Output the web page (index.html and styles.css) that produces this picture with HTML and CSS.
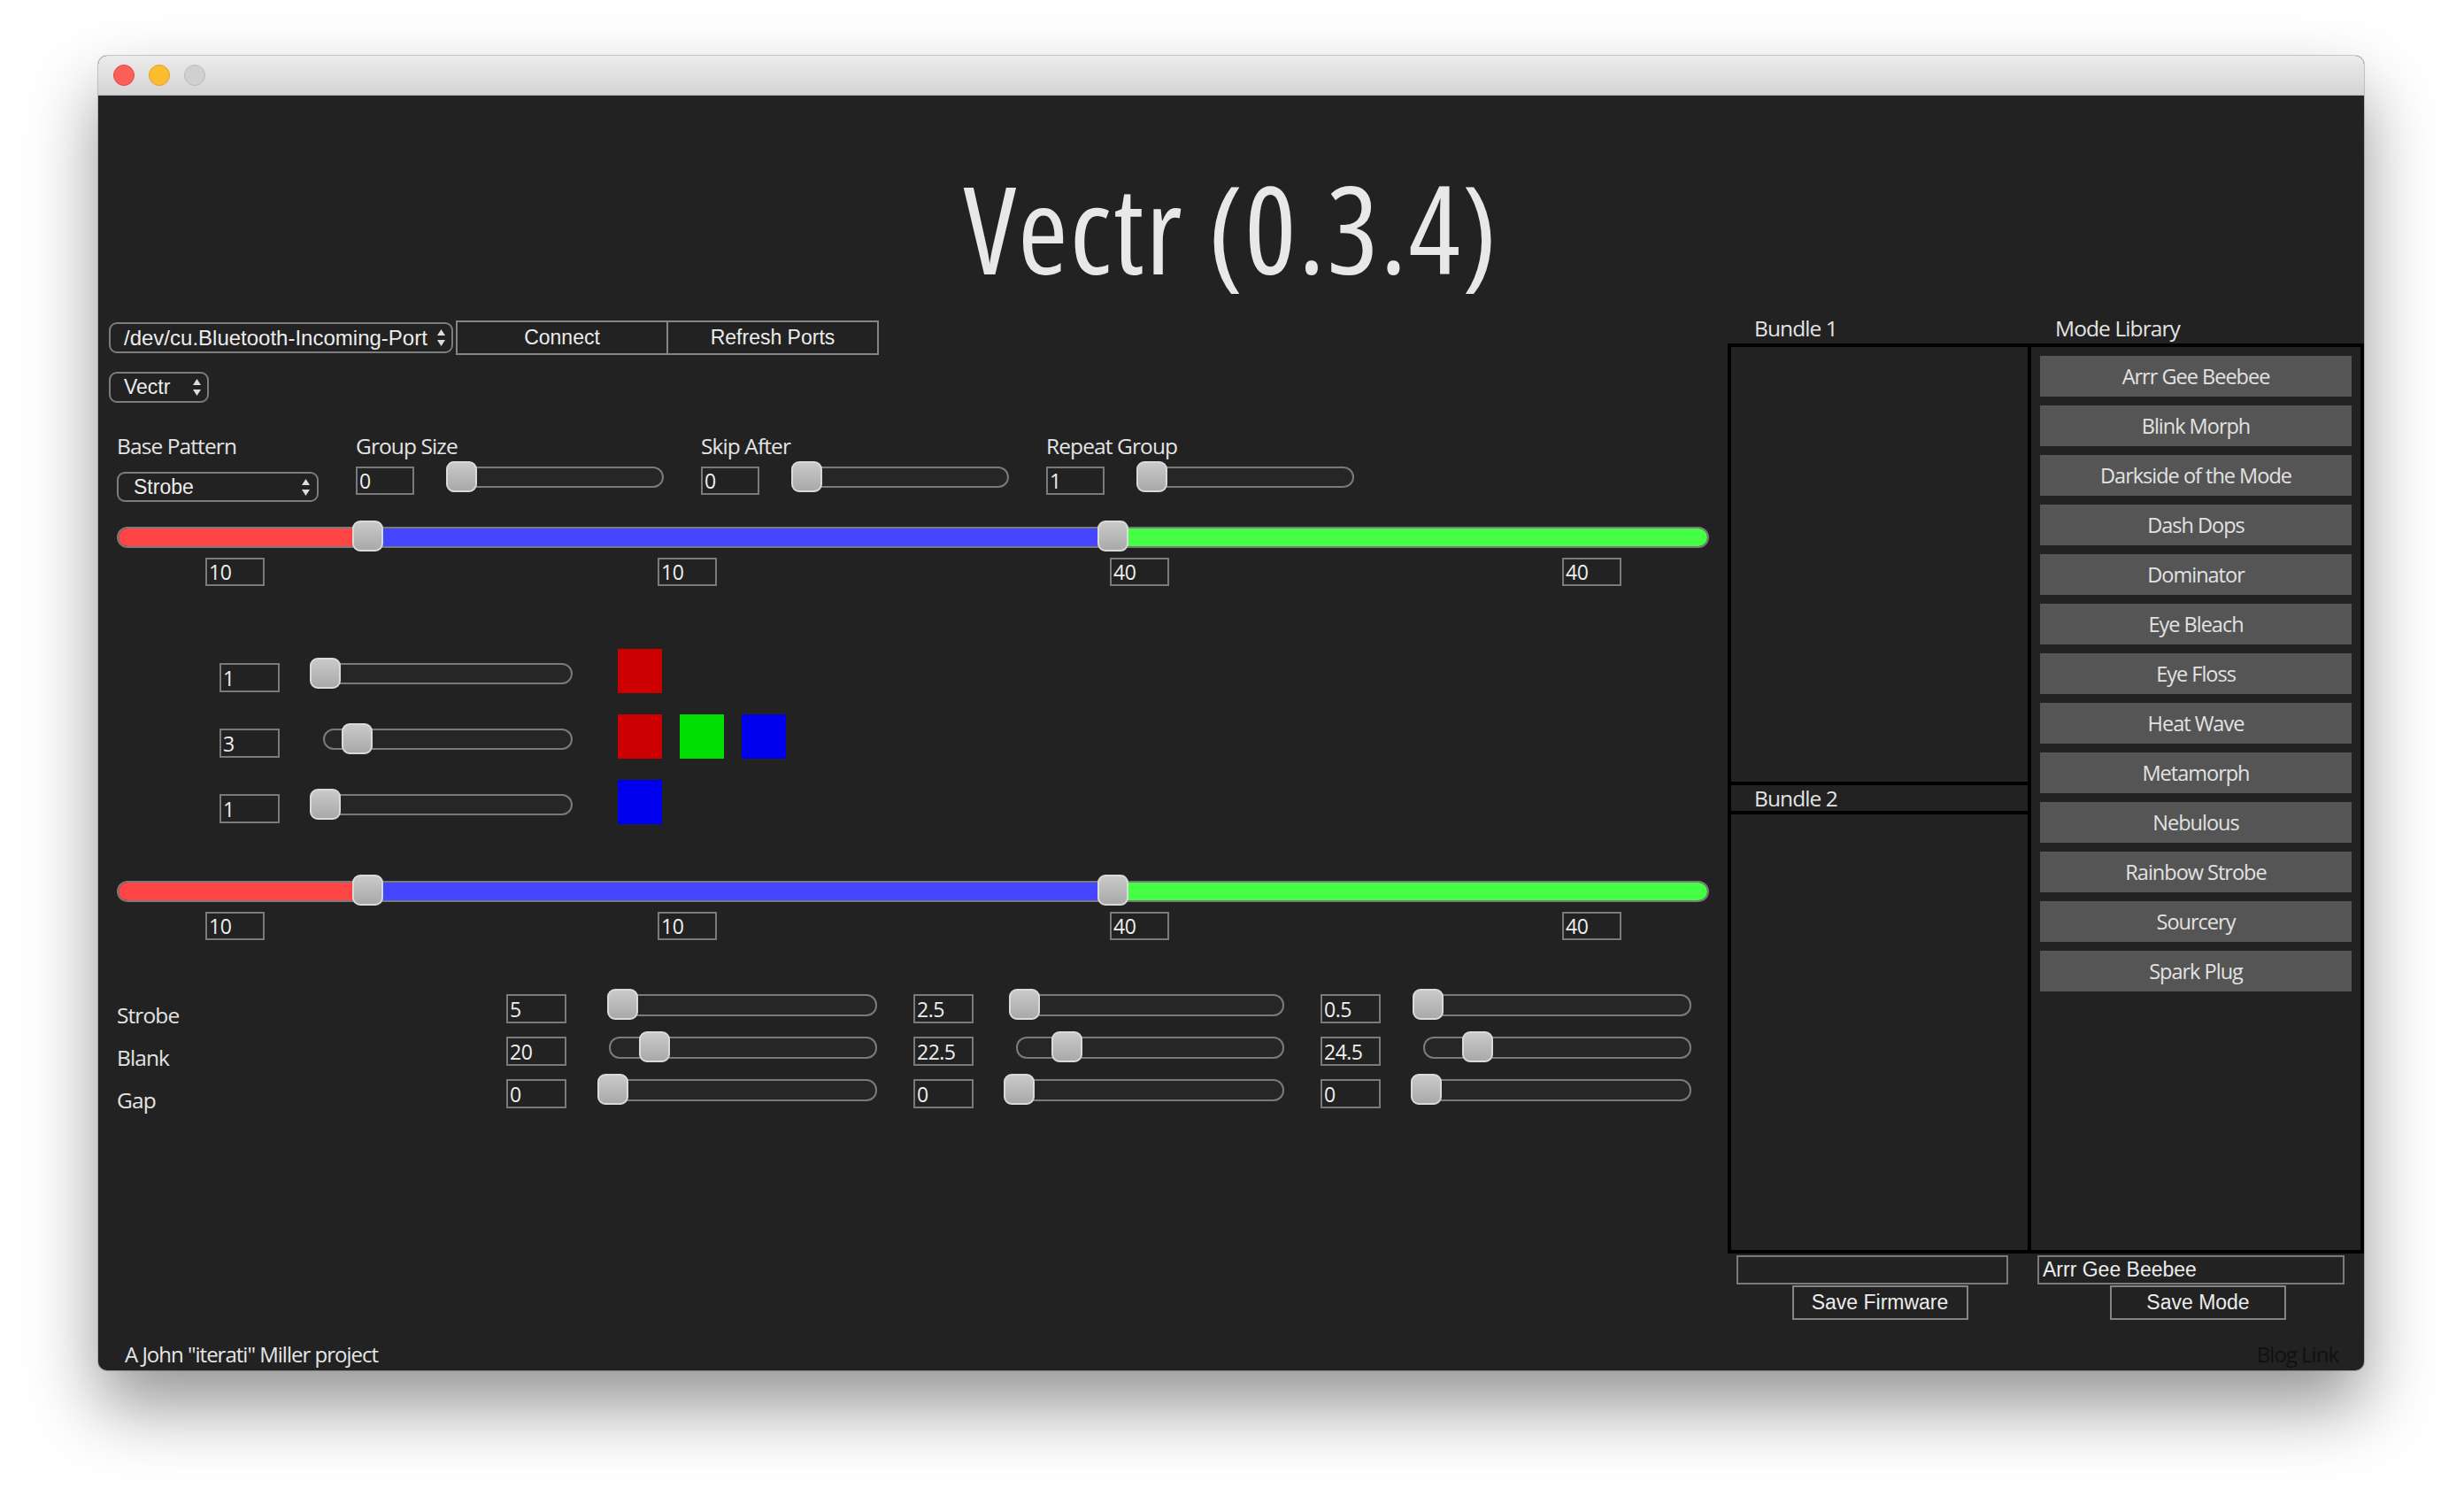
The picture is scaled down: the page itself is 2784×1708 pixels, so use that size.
FILE: index.html
```html
<!DOCTYPE html>
<html lang="en">
<head>
<meta charset="utf-8">
<title>Vectr</title>
<link rel="stylesheet" href="styles.css">
</head>
<body>
<div class="window">
  <div class="titlebar">
    <span class="light red"></span><span class="light yellow"></span><span class="light gray"></span>
  </div>
  <div class="content">
    <h1 class="title">Vectr (0.3.4)</h1>
    <div class="main">
      <div class="left">
        <div class="portrow">
          <div class="select port"><span class="sel-text">/dev/cu.Bluetooth-Incoming-Port</span><svg class="arrows" width="11" height="21" viewBox="0 0 11 21"><path d="M5.5 1 L10 8 H1 Z M5.5 20 L10 13 H1 Z"/></svg></div>
          <button class="btn connect">Connect</button>
          <button class="btn refresh">Refresh Ports</button>
        </div>
        <div class="select device"><span class="sel-text">Vectr</span><svg class="arrows" width="11" height="21" viewBox="0 0 11 21"><path d="M5.5 1 L10 8 H1 Z M5.5 20 L10 13 H1 Z"/></svg></div>

        <div class="section">
          <div class="params">
            <div class="param base">
              <div class="label">Base Pattern</div>
              <div class="select pattern"><span class="sel-text">Strobe</span><svg class="arrows" width="11" height="21" viewBox="0 0 11 21"><path d="M5.5 1 L10 8 H1 Z M5.5 20 L10 13 H1 Z"/></svg></div>
            </div>
            <div class="param">
              <div class="label">Group Size</div>
              <div class="ctrl"><input class="num" value="0"><div class="track ptrack"><span class="thumb" style="left:-2px"></span></div></div>
            </div>
            <div class="param">
              <div class="label">Skip After</div>
              <div class="ctrl"><input class="num" value="0"><div class="track ptrack"><span class="thumb" style="left:-2px"></span></div></div>
            </div>
            <div class="param">
              <div class="label">Repeat Group</div>
              <div class="ctrl"><input class="num" value="1"><div class="track ptrack"><span class="thumb" style="left:-2px"></span></div></div>
            </div>
          </div>

          <div class="bigslider">
            <span class="seg red-seg" style="width:281px"></span><span class="seg blue-seg" style="width:842px"></span><span class="seg green-seg"></span>
            <span class="thumb big" style="left:264px"></span>
            <span class="thumb big" style="left:1106px"></span>
          </div>
          <div class="marks">
            <input class="num mark" value="10"><input class="num mark" value="10"><input class="num mark" value="40"><input class="num mark" value="40">
          </div>

          <div class="colorrows">
            <div class="crow">
              <input class="num cnum" value="1">
              <div class="track ctrack"><span class="thumb" style="left:-17px"></span></div>
              <div class="swatches"><span class="swatch sw-red"></span></div>
            </div>
            <div class="crow">
              <input class="num cnum" value="3">
              <div class="track ctrack"><span class="thumb" style="left:19px"></span></div>
              <div class="swatches"><span class="swatch sw-red"></span><span class="swatch sw-green"></span><span class="swatch sw-blue"></span></div>
            </div>
            <div class="crow">
              <input class="num cnum" value="1">
              <div class="track ctrack"><span class="thumb" style="left:-17px"></span></div>
              <div class="swatches"><span class="swatch sw-blue"></span></div>
            </div>
          </div>

          <div class="bigslider second">
            <span class="seg red-seg" style="width:281px"></span><span class="seg blue-seg" style="width:842px"></span><span class="seg green-seg"></span>
            <span class="thumb big" style="left:264px"></span>
            <span class="thumb big" style="left:1106px"></span>
          </div>
          <div class="marks">
            <input class="num mark" value="10"><input class="num mark" value="10"><input class="num mark" value="40"><input class="num mark" value="40">
          </div>

          <div class="timing">
            <div class="trow">
              <div class="label tlabel">Strobe</div>
              <input class="num tnum" value="5">
              <div class="track ttrack"><span class="thumb tthumb" style="left:-4px"></span></div>
              <input class="num tnum" value="2.5">
              <div class="track ttrack"><span class="thumb tthumb" style="left:-10px"></span></div>
              <input class="num tnum" value="0.5">
              <div class="track ttrack"><span class="thumb tthumb" style="left:-14px"></span></div>
            </div>
            <div class="trow">
              <div class="label tlabel">Blank</div>
              <input class="num tnum" value="20">
              <div class="track ttrack"><span class="thumb tthumb" style="left:32px"></span></div>
              <input class="num tnum" value="22.5">
              <div class="track ttrack"><span class="thumb tthumb" style="left:38px"></span></div>
              <input class="num tnum" value="24.5">
              <div class="track ttrack"><span class="thumb tthumb" style="left:42px"></span></div>
            </div>
            <div class="trow">
              <div class="label tlabel">Gap</div>
              <input class="num tnum" value="0">
              <div class="track ttrack"><span class="thumb tthumb" style="left:-15px"></span></div>
              <input class="num tnum" value="0">
              <div class="track ttrack"><span class="thumb tthumb" style="left:-16px"></span></div>
              <input class="num tnum" value="0">
              <div class="track ttrack"><span class="thumb tthumb" style="left:-16px"></span></div>
            </div>
          </div>
        </div>
      </div>

      <div class="panel">
        <div class="panel-heads">
          <div class="label phead">Bundle 1</div>
          <div class="label phead lib">Mode Library</div>
        </div>
        <div class="box">
          <div class="bcol">
            <div class="bundle b1"></div>
            <div class="label bhead">Bundle 2</div>
            <div class="bundle b2"></div>
          </div>
          <div class="lib-col">
            <button class="mode">Arrr Gee Beebee</button>
            <button class="mode">Blink Morph</button>
            <button class="mode">Darkside of the Mode</button>
            <button class="mode">Dash Dops</button>
            <button class="mode">Dominator</button>
            <button class="mode">Eye Bleach</button>
            <button class="mode">Eye Floss</button>
            <button class="mode">Heat Wave</button>
            <button class="mode">Metamorph</button>
            <button class="mode">Nebulous</button>
            <button class="mode">Rainbow Strobe</button>
            <button class="mode">Sourcery</button>
            <button class="mode">Spark Plug</button>
          </div>
        </div>
        <div class="panel-bottom">
          <div class="pcell">
            <input class="text fw-name" value="">
            <button class="btn save">Save Firmware</button>
          </div>
          <div class="pcell">
            <input class="text mode-name" value="Arrr Gee Beebee">
            <button class="btn save">Save Mode</button>
          </div>
        </div>
      </div>
    </div>
    <div class="footer">
      <span class="credit">A John "iterati" Miller project</span>
      <span class="blog">Blog Link</span>
    </div>
  </div>
</div>
</body>
</html>
```

FILE: styles.css
```css
* { box-sizing: border-box; }

html, body {
  margin: 0;
  padding: 0;
}

body {
  width: 2784px;
  height: 1708px;
  overflow: hidden;
  background: #ffffff;
  font-family: "Open Sans", "Noto Sans", sans-serif;
  font-stretch: 95%;
  color: #e6e6e6;
}

.window {
  margin: 63px 0 0 111px;
  width: 2560px;
  height: 1485px;
  border-radius: 10px;
  background: #222222;
  overflow: hidden;
  display: flex;
  flex-direction: column;
  box-shadow: 0 40px 80px rgba(0, 0, 0, 0.42), 0 0 0 1px rgba(0, 0, 0, 0.18);
}

.titlebar {
  height: 45px;
  flex: none;
  background: linear-gradient(#ececec, #d4d4d4);
  border-bottom: 1px solid #b4b4b4;
  display: flex;
  align-items: center;
  padding-left: 17px;
  gap: 16px;
}

.light {
  width: 24px;
  height: 24px;
  border-radius: 50%;
  display: block;
}
.light.red { background: #fc5f57; border: 1px solid #df4a44; }
.light.yellow { background: #fdbc2e; border: 1px solid #dea22c; }
.light.gray { background: #d0d0d0; border: 1px solid #bababa; }

.content {
  flex: 1;
  display: flex;
  flex-direction: column;
}

.title {
  margin: 81px 0 0;
  height: 137px;
  font-size: 137px;
  line-height: 137px;
  font-weight: 500;
  font-stretch: 75%;
  text-align: center;
  color: #e8e8e8;
  letter-spacing: 2px;
}

.main {
  margin-top: 30px;
  display: flex;
  padding-left: 12px;
}

.left {
  width: 1829px;
  padding-top: 6px;
}

/* system-ish controls */
.select, .btn, .text {
  font-family: "Liberation Sans", Arial, sans-serif;
  font-stretch: normal;
  font-size: 23px;
  color: #ececec;
}

.select {
  display: flex;
  align-items: center;
  height: 35px;
  border: 2px solid #7c7c7c;
  border-radius: 9px;
  padding: 0 6px 0 15px;
}
.sel-text { flex: 1; white-space: nowrap; }
.arrows { fill: #dcdcdc; flex: none; }

.portrow {
  display: flex;
  align-items: center;
  height: 39px;
}
.select.port { width: 389px; padding-right: 6px; font-size: 24px; }

.btn {
  background: transparent;
  border: 2px solid #858585;
  height: 39px;
  padding: 0;
  cursor: pointer;
}
.connect { width: 240px; margin-left: 3px; }
.refresh { width: 238px; border-left: 0; }

.select.device {
  width: 113px;
  margin-top: 19px;
}

.section {
  padding-left: 9px;
}

.label {
  font-size: 24.5px;
  line-height: 30px;
  color: #e4e4e4;
  white-space: nowrap;
  letter-spacing: -0.9px;
}

.params {
  display: flex;
  gap: 42px;
  margin-top: 34px;
}
.param { width: 348px; }
.param.base { width: 228px; }

.select.pattern {
  width: 228px;
  height: 34px;
  margin-top: 14px;
  padding: 0 7px 0 17px;
}

.ctrl {
  display: flex;
  align-items: flex-start;
  gap: 36px;
  margin-top: 8px;
}

.num {
  font-family: "Open Sans", "Noto Sans", sans-serif;
  font-stretch: 95%;
  font-size: 23px;
  letter-spacing: -0.5px;
  color: #efefef;
  background: transparent;
  border: 2px solid #7a7a7a;
  border-radius: 0;
  padding: 0 2px;
  margin: 0;
  height: 32px;
  width: 66px;
  outline: none;
}

.track {
  position: relative;
  height: 24px;
  border: 2px solid #7a7a7a;
  border-radius: 12px;
  background: #262626;
  flex: none;
}
.ptrack { width: 246px; }

.thumb {
  position: absolute;
  top: -8px;
  width: 35px;
  height: 35px;
  border-radius: 9px;
  border: 2px solid #dadada;
  background: linear-gradient(#c9c9c9, #a9a9a9);
  display: block;
}

.bigslider {
  position: relative;
  margin-top: 28px;
  width: 1799px;
  height: 24px;
  border: 2px solid #7a7a7a;
  border-radius: 12px;
  display: flex;
}
.bigslider.second { margin-top: 64px; }
.seg { display: block; height: 100%; flex: none; }
.red-seg { background: #ff4545; border-radius: 10px 0 0 10px; }
.blue-seg { background: #4545ff; }
.green-seg { background: #45ff45; flex: 1; border-radius: 0 10px 10px 0; }
.thumb.big { top: -9px; }

.marks {
  display: flex;
  gap: 444px;
  padding-left: 100px;
  margin-top: 11px;
}
.num.mark { width: 67px; }

.colorrows {
  margin-top: 71px;
  display: flex;
  flex-direction: column;
  gap: 24px;
}
.crow {
  display: flex;
  align-items: flex-start;
  padding-left: 116px;
  height: 50px;
}
.num.cnum { width: 68px; height: 33px; margin-top: 16px; }
.ctrack { width: 282px; margin-left: 49px; margin-top: 16px; }
.swatches {
  display: flex;
  gap: 20px;
  margin-left: 51px;
}
.swatch { width: 50px; height: 50px; display: block; }
.sw-red { background: #cc0000; }
.sw-green { background: #00e000; }
.sw-blue { background: #0000ee; }

.timing {
  margin-top: 61px;
  display: flex;
  flex-direction: column;
  gap: 15px;
}
.trow {
  display: flex;
  align-items: flex-start;
  height: 33px;
}
.tlabel { width: 440px; margin-top: 9px; flex: none; }
.num.tnum { width: 68px; height: 33px; flex: none; }
.ttrack { width: 303px; height: 25px; margin-left: 48px; margin-right: 41px; }
.tthumb { top: -8px; }

/* right panel */
.panel {
  width: 719px;
  flex: none;
}
.panel-heads {
  display: grid;
  grid-template-columns: 344px 375px;
  height: 30px;
}
.phead { padding-left: 30px; }
.phead.lib { padding-left: 26px; }

.box {
  margin-top: 2px;
  height: 1028px;
  border: 4px solid #000;
  display: grid;
  grid-template-columns: 339px 1fr;
}
.bcol {
  border-right: 4px solid #000;
  display: flex;
  flex-direction: column;
}
.bundle.b1 { height: 491px; }
.bhead {
  border-top: 4px solid #000;
  border-bottom: 4px solid #000;
  height: 37px;
  line-height: 29px;
  padding-left: 26px;
}
.bundle.b2 { flex: 1; }

.lib-col {
  display: flex;
  flex-direction: column;
  gap: 10px;
  padding: 10px 9px 0 10px;
}
.mode {
  height: 46px;
  width: 352px;
  border: 0;
  background: #555555;
  color: #e2e2e2;
  font-family: "Open Sans", "Noto Sans", sans-serif;
  font-stretch: 95%;
  font-size: 23.5px;
  letter-spacing: -1px;
  padding: 0;
}

.panel-bottom {
  display: grid;
  grid-template-columns: 344px 375px;
  margin-top: 2px;
}
.pcell {
  display: flex;
  flex-direction: column;
  align-items: center;
}
.text {
  height: 33px;
  background: transparent;
  border: 2px solid #7a7a7a;
  padding: 0 4px;
  margin: 0;
  outline: none;
}
.fw-name { width: 307px; align-self: flex-start; margin-left: 10px; }
.mode-name { width: 347px; align-self: flex-start; margin-left: 6px; }
.btn.save { width: 199px; height: 39px; margin-top: 1px; }

.footer {
  margin-top: auto;
  display: flex;
  justify-content: space-between;
  padding: 0 29px 3px 30px;
  font-size: 24px;
  line-height: 30px;
  letter-spacing: -1px;
}
.credit { color: #e6e6e6; }
.blog { color: #111111; }
```
